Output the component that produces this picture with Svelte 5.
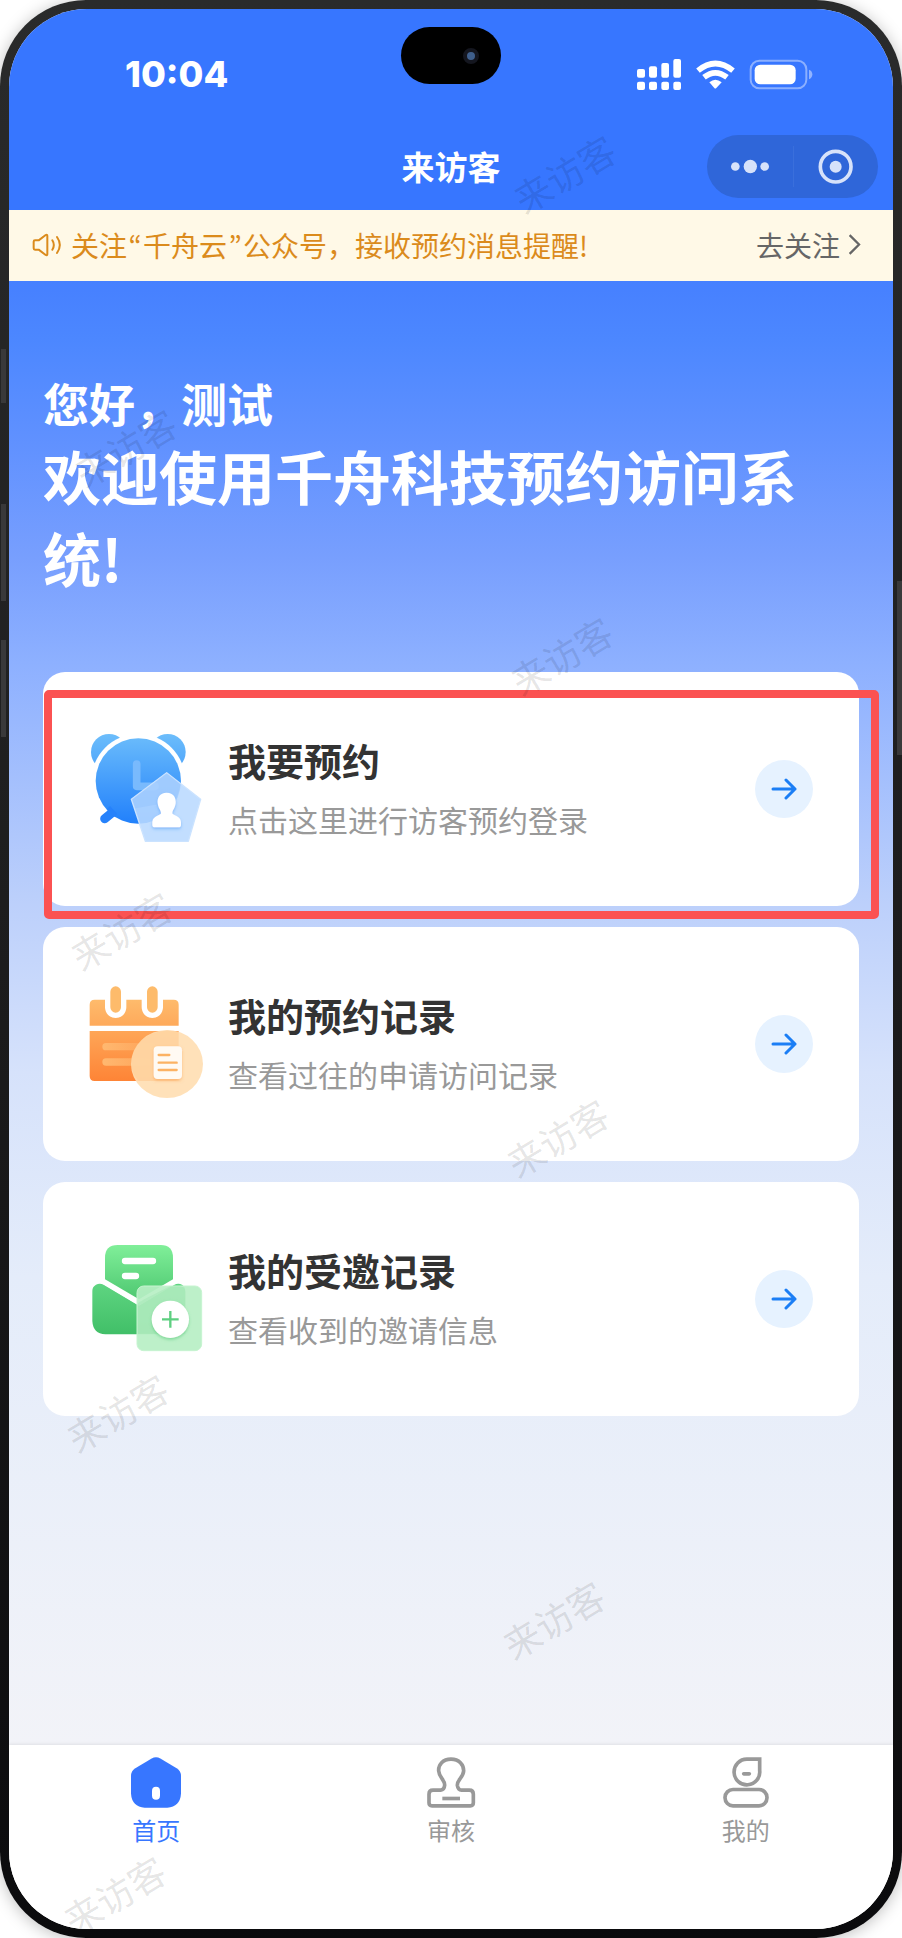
<script>
  const cards = [
    { id: 'book', title: '我要预约', text: '点击这里进行访客预约登录', marked: true },
    { id: 'records', title: '我的预约记录', text: '查看过往的申请访问记录' },
    { id: 'invites', title: '我的受邀记录', text: '查看收到的邀请信息' }
  ];

  const tabs = [
    { id: 'home', label: '首页' },
    { id: 'review', label: '审核' },
    { id: 'mine', label: '我的' }
  ];

  const watermarks = [
    { x: 564, y: 173 },
    { x: 125, y: 447 },
    { x: 561, y: 655 },
    { x: 121, y: 930 },
    { x: 557, y: 1137 },
    { x: 117, y: 1412 },
    { x: 553, y: 1619 },
    { x: 114, y: 1894 }
  ];

  let active = $state('home');
</script>

<div class="phone" lang="zh-CN">
  <i class="key key-a"></i>
  <i class="key key-b"></i>
  <i class="key key-c"></i>
  <i class="key key-d"></i>

  <div class="screen">
    <header>
      <div class="status">
        <span class="time">10:04</span>
        <svg class="signals" viewBox="552 165 531 111" aria-hidden="true">
          <g fill="#fff">
            <rect x="555" y="204" width="24" height="26" rx="6" />
            <rect x="591" y="196" width="24" height="34" rx="6" />
            <rect x="628" y="186" width="23" height="44" rx="6" />
            <rect x="664" y="174" width="23" height="56" rx="6" />
            <rect x="555" y="242" width="24" height="25" rx="6" />
            <rect x="591" y="242" width="24" height="25" rx="6" />
            <rect x="628" y="242" width="23" height="25" rx="6" />
            <rect x="664" y="242" width="23" height="25" rx="6" />
            <path d="M772 244Q790 229 809 244L793 261Q790 264 787 261Z" />
          </g>
          <g fill="none" stroke="#fff" stroke-width="17">
            <path d="M738 209Q790 166 843 209" />
            <path d="M756 229Q790 202 825 229" />
          </g>
          <rect x="896" y="179" width="167" height="83" rx="26" fill="none" stroke="#fff" stroke-opacity=".42" stroke-width="6" />
          <rect x="908" y="191" width="123" height="59" rx="17" fill="#fff" />
          <path d="M1071 206Q1081 210 1081 220Q1081 231 1071 235Z" fill="#fff" fill-opacity=".45" />
        </svg>
        <div class="island"><i></i></div>
      </div>
      <div class="nav">
        <h1>来访客</h1>
        <div class="capsule">
          <button aria-label="更多">
            <svg viewBox="836 446 120 104" width="40" height="35">
              <g fill="#d7e2fa">
                <circle cx="852" cy="498" r="13" />
                <circle cx="897" cy="498" r="20" />
                <circle cx="940" cy="498" r="13" />
              </g>
            </svg>
          </button>
          <button aria-label="关闭">
            <svg viewBox="1102 445 105 105" width="35" height="35">
              <circle cx="1155" cy="498" r="46" fill="none" stroke="#d7e2fa" stroke-width="11" />
              <circle cx="1155" cy="498" r="18" fill="#d7e2fa" />
            </svg>
          </button>
        </div>
      </div>
    </header>

    <div class="notice">
      <svg viewBox="97 702 90 72" width="30" height="24" fill="none" stroke="#db8b1c" stroke-width="6" stroke-linejoin="round" stroke-linecap="round" aria-hidden="true">
        <path d="M102 728Q102 724 106 724H117L138 708Q143 705 143 711V765Q143 771 138 768L117 752H106Q102 752 102 748Z" />
        <path d="M158 724Q167 738 158 752M172 714Q189 738 172 762" />
      </svg>
      <p>关注<span class="quote">“</span>千舟云<span class="quote">”</span>公众号，接收预约消息提醒!</p>
      <a href="#follow">
        去关注
        <svg viewBox="1192 704 40 68" width="13" height="23" fill="none" stroke="#666" stroke-width="7" aria-hidden="true">
          <path d="M1197 709L1226 738L1197 767" />
        </svg>
      </a>
    </div>

    <main>
      <p class="hello">您好，测试</p>
      <h2>欢迎使用千舟科技预约访问系统!</h2>

      <div class="cards">
        {#each cards as card (card.id)}
          <button class="card" class:marked={card.marked}>
            {#if card.id === 'book'}
              <svg class="art" viewBox="81 87 360 360" aria-hidden="true">
                <defs>
                  <linearGradient id="clock" gradientUnits="userSpaceOnUse" x1="0" y1="102" x2="0" y2="372">
                    <stop offset="0" stop-color="#6cbdfb" />
                    <stop offset="1" stop-color="#2180fb" />
                  </linearGradient>
                  <filter id="soft-blue" x="-30%" y="-30%" width="160%" height="170%">
                    <feDropShadow dx="0" dy="5" stdDeviation="5" flood-color="#4a9af5" flood-opacity=".55" />
                  </filter>
                </defs>
                <circle cx="147" cy="156" r="54" fill="url(#clock)" />
                <circle cx="323" cy="156" r="54" fill="url(#clock)" />
                <circle cx="235" cy="243" r="141" fill="#fff" />
                <path d="M134 356L156 338" stroke="#2682fb" stroke-width="27" stroke-linecap="round" />
                <circle cx="235" cy="243" r="128" fill="url(#clock)" />
                <path d="M140 328L163 350L172 342L150 318Z" fill="#2682fb" />
                <path d="M230 192V259H285" fill="none" stroke="#79bafd" stroke-width="23" stroke-linecap="round" stroke-linejoin="round" />
                <path d="M320 218L422 298L385 424H256L214 298Z" fill="#b9d9ff" fill-opacity=".88" stroke="#cbe3ff" stroke-width="4" stroke-linejoin="round" />
                <path d="M320 220L362 253Q356 282 343 312H300L226 325L217 298Z" fill="#7fb8fd" fill-opacity=".25" />
                <g filter="url(#soft-blue)" fill="#fff">
                  <path d="M320 278C299 278 291 294 293 310C295 326 303 330 303 340C303 346 278 347 277 366V375Q277 382 285 382H355Q363 382 363 375V366C362 347 337 346 337 340C337 330 345 326 347 310C349 294 341 278 320 278Z" />
                </g>
              </svg>
            {:else if card.id === 'records'}
              <svg class="art" viewBox="81 75 360 360" aria-hidden="true">
                <defs>
                  <linearGradient id="calendar" gradientUnits="userSpaceOnUse" x1="0" y1="82" x2="0" y2="366">
                    <stop offset="0" stop-color="#fec475" />
                    <stop offset="1" stop-color="#fe8436" />
                  </linearGradient>
                  <linearGradient id="rule" x1="0" x2="1">
                    <stop offset="0" stop-color="#ffb870" />
                    <stop offset="1" stop-color="#fea257" />
                  </linearGradient>
                  <filter id="soft-orange" x="-30%" y="-30%" width="160%" height="170%">
                    <feDropShadow dx="0" dy="5" stdDeviation="5" flood-color="#f79a45" flood-opacity=".5" />
                  </filter>
                </defs>
                <path d="M104 122H341Q356 122 356 137V200H89V137Q89 122 104 122ZM89 216H356V351Q356 366 341 366H104Q89 366 89 351Z" fill="url(#calendar)" />
                <path d="M167 112V145M277 112V145" stroke="#fff" stroke-width="64" stroke-linecap="round" />
                <path d="M167 98V145M277 98V145" stroke="#fdbb6b" stroke-width="32" stroke-linecap="round" />
                <rect x="127" y="252" width="160" height="22" rx="11" fill="url(#rule)" />
                <rect x="127" y="298" width="160" height="22" rx="11" fill="url(#rule)" />
                <ellipse cx="321" cy="315" rx="108" ry="102" fill="#ffdfb4" fill-opacity=".93" />
                <path d="M356 219V366H236Q214 342 214 315Q216 226 321 214Q340 213 356 219Z" fill="#fdb568" fill-opacity=".18" />
                <rect x="281" y="262" width="85" height="98" rx="12" fill="#fffaf3" filter="url(#soft-orange)" />
                <path d="M296 288H328M296 311H350M296 333H350" stroke="#fcb263" stroke-width="7" stroke-linecap="round" />
              </svg>
            {:else}
              <svg class="art" viewBox="81 90 360 360" aria-hidden="true">
                <defs>
                  <linearGradient id="letter" gradientUnits="userSpaceOnUse" x1="0" y1="108" x2="0" y2="290">
                    <stop offset="0" stop-color="#80ef99" />
                    <stop offset="1" stop-color="#48c36c" />
                  </linearGradient>
                  <linearGradient id="envelope" gradientUnits="userSpaceOnUse" x1="0" y1="222" x2="0" y2="376">
                    <stop offset="0" stop-color="#5fd581" />
                    <stop offset="1" stop-color="#41bf68" />
                  </linearGradient>
                  <filter id="soft-green" x="-30%" y="-30%" width="160%" height="170%">
                    <feDropShadow dx="0" dy="5" stdDeviation="5" flood-color="#55c979" flood-opacity=".6" />
                  </filter>
                </defs>
                <path d="M108 227Q120 221 132 228L237 290L342 228Q354 221 366 227Q376 233 376 246V336Q374 374 336 376H136Q99 374 97 336V246Q97 233 108 227Z" fill="url(#envelope)" />
                <path d="M173 108H302Q339 108 339 146V219L237 282L135 219V146Q135 108 173 108Z" fill="#fff" />
                <path d="M125 213L237 280L349 213" fill="none" stroke="#fff" stroke-width="16" />
                <path d="M173 108H302Q339 108 339 146V211L237 271L135 211V146Q135 108 173 108Z" fill="url(#letter)" />
                <path d="M195 156H279M195 201H228" stroke="#fff" stroke-width="19" stroke-linecap="round" />
                <rect x="231" y="231" width="194" height="194" rx="20" fill="#b7efc4" fill-opacity=".92" stroke="#c6f4d0" stroke-width="3" />
                <path d="M250 272L330 232H358Q376 232 376 250V374H234V282Z" fill="#8ee0a4" fill-opacity=".28" />
                <circle cx="331" cy="331" r="56" fill="#fff" filter="url(#soft-green)" />
                <path d="M306 331H356M331 306V356" stroke="#5dcf80" stroke-width="7" />
              </svg>
            {/if}
            <span class="copy">
              <strong>{card.title}</strong>
              <span>{card.text}</span>
            </span>
            <span class="go">
              <svg viewBox="0 0 26 22" width="26" height="22" fill="none" stroke="#1b7ef5" stroke-width="3" stroke-linecap="round" stroke-linejoin="round" aria-hidden="true">
                <path d="M2 11H24M15 2L24 11L15 20" />
              </svg>
            </span>
          </button>
        {/each}
      </div>
    </main>

    <nav class="tabs">
      {#each tabs as tab (tab.id)}
        <button class:active={active === tab.id} onclick={() => (active = tab.id)}>
          {#if tab.id === 'home'}
            <svg viewBox="393 112 150 152" aria-hidden="true">
              <path d="M455 116Q468 109 481 116L530 145Q543 153 543 168V222Q540 261 502 264H434Q396 261 393 222V168Q393 153 406 145Z" fill="#3776ff" />
              <rect x="456" y="201" width="24" height="39" rx="12" fill="#fff" />
            </svg>
          {:else if tab.id === 'review'}
            <svg viewBox="1278 112 150 152" fill="none" stroke="#999" stroke-width="11" aria-hidden="true">
              <path d="M1353 118C1328 118 1315 135 1316 153C1317 173 1335 180 1334 196Q1333 210 1322 211H1299Q1287 211 1287 223V249Q1287 258 1296 258H1411Q1420 258 1420 249V223Q1420 211 1408 211H1385Q1374 210 1372 196C1371 180 1390 173 1391 153C1391 135 1378 118 1353 118Z" />
              <path d="M1327 236H1380" />
            </svg>
          {:else}
            <svg viewBox="810 112 150 152" fill="none" stroke="#999" stroke-width="11" aria-hidden="true">
              <path d="M926 118V152A38.500 38.500 0 1 1 888 118Z" />
              <path d="M878 162H895" stroke-linecap="round" />
              <rect x="822" y="209" width="126" height="49" rx="24" />
            </svg>
          {/if}
          <span>{tab.label}</span>
        </button>
      {/each}
    </nav>
  </div>

  <div class="watermarks" aria-hidden="true">
    {#each watermarks as mark}
      <span style="left: {mark.x}px; top: {mark.y}px">来访客</span>
    {/each}
  </div>
</div>

<style>
  :global(body) {
    margin: 0;
    background: #fff;
  }

  .phone {
    position: relative;
    box-sizing: border-box;
    display: flex;
    min-height: 100vh;
    padding: 9px;
    overflow: hidden;
    border-radius: 86px;
    background: linear-gradient(#2a2b2b, #1c1c1d 50%, #0b0b0d);
    box-shadow: 0 2px 16px rgba(0, 0, 0, 0.25);
    font-family: "Noto Sans CJK SC", sans-serif;
    color: #fff;
  }

  .phone button {
    margin: 0;
    padding: 0;
    border: 0;
    background: none;
    font: inherit;
    color: inherit;
  }

  svg {
    flex: none;
    display: block;
  }

  .key {
    position: absolute;
    left: 1px;
    width: 5px;
    background: #39393a;
  }

  .key-a {
    top: 349px;
    height: 54px;
  }

  .key-b {
    top: 504px;
    height: 97px;
  }

  .key-c {
    top: 640px;
    height: 97px;
  }

  .key-d {
    top: 581px;
    right: 0;
    left: auto;
    height: 174px;
  }

  .screen {
    flex: 1;
    min-width: 0;
    display: flex;
    flex-direction: column;
    overflow: hidden;
    border-radius: 78px;
    background: #fff;
  }

  header {
    background: #3776ff;
  }

  .status {
    position: relative;
    box-sizing: border-box;
    display: flex;
    align-items: center;
    justify-content: space-between;
    height: 115px;
    padding: 15px 80px 0 116px;
  }

  .time {
    font: 800 36px/44px Inter, sans-serif;
  }

  .signals {
    width: 177px;
    height: 37px;
  }

  .island {
    position: absolute;
    top: 18px;
    left: 50%;
    width: 100px;
    height: 57px;
    margin-left: -50px;
    border-radius: 29px;
    background: #000;
  }

  .island i {
    position: absolute;
    top: 21px;
    right: 22px;
    width: 8px;
    height: 8px;
    border: 4px solid #14161f;
    border-radius: 50%;
    background: #3f5f8c;
  }

  .nav {
    display: grid;
    grid-template-columns: 1fr auto 1fr;
    align-items: center;
    height: 84px;
    padding: 0 15px 2px;
  }

  h1 {
    grid-column: 2;
    margin: 0;
    font-size: 33px;
    font-weight: 700;
    line-height: 48px;
  }

  .capsule {
    justify-self: end;
    display: flex;
    width: 171px;
    height: 63px;
    border-radius: 32px;
    background: #2f66d9;
  }

  .capsule button {
    flex: 1;
    display: grid;
    place-items: center;
    position: relative;
  }

  .capsule button + button::before {
    content: "";
    position: absolute;
    left: 0;
    top: 11px;
    bottom: 11px;
    width: 1px;
    background: #3a6fdc;
  }

  .notice {
    display: flex;
    align-items: center;
    height: 69px;
    padding: 0 32px 2px 23px;
    background: #fff9e7;
    font-size: 28px;
    line-height: 40px;
    color: #db8b1c;
  }

  .notice p {
    flex: 1;
    margin: 0 0 0 9px;
  }

  .quote {
    display: inline-block;
    width: 16px;
    font-family: "Noto Sans CJK KR", sans-serif;
    text-align: center;
  }

  .notice a {
    display: flex;
    align-items: center;
    gap: 8px;
    color: #666;
    text-decoration: none;
  }

  main {
    flex: 1;
    padding: 89px 34px 40px;
    background: linear-gradient(
      #4680ff,
      #4c87ff 4%,
      #6091ff 11%,
      #789ffe 19%,
      #8db0ff 26%,
      #bbcffb 42%,
      #d6e2fb 54%,
      #e4ecfa 68%,
      #f2f3f8
    );
  }

  .hello {
    margin: 0;
    font-size: 46px;
    font-weight: 700;
    line-height: 64px;
  }

  h2 {
    margin: 0;
    font-size: 58px;
    font-weight: 700;
    line-height: 82px;
  }

  .cards {
    display: grid;
    gap: 21px;
    margin-top: 74px;
  }

  .phone .card {
    position: relative;
    box-sizing: border-box;
    display: flex;
    align-items: center;
    gap: 21px;
    min-height: 234px;
    padding: 40px 46px 40px 44px;
    border-radius: 22px;
    background: #fff;
    text-align: left;
  }

  .marked::after {
    content: "";
    position: absolute;
    inset: 18px -20px -13px 1px;
    border: 8px solid #fb5252;
    border-radius: 5px;
  }

  .art {
    width: 120px;
    height: 120px;
  }

  .copy {
    flex: 1;
    display: grid;
    gap: 10px;
    padding-bottom: 6px;
    font-size: 30px;
    line-height: 42px;
    color: #999;
  }

  .copy strong {
    font-size: 38px;
    font-weight: 700;
    line-height: 56px;
    color: #333;
  }

  .go {
    display: grid;
    place-items: center;
    width: 58px;
    height: 58px;
    border-radius: 50%;
    background: #e6f2ff;
  }

  .tabs {
    display: grid;
    grid-template-columns: repeat(3, 1fr);
    min-height: 184px;
    background: #fff;
    box-shadow: 0 -1px 3px rgba(0, 0, 0, 0.08);
  }

  .phone .tabs button {
    display: flex;
    flex-direction: column;
    align-items: center;
    gap: 6px;
    padding-top: 12px;
    font-size: 24px;
    line-height: 32px;
    color: #999;
  }

  .phone .tabs .active {
    color: #3776ff;
  }

  .tabs svg {
    width: 50px;
    height: 51px;
  }

  .watermarks {
    position: absolute;
    inset: 9px;
    overflow: hidden;
    border-radius: 78px;
    pointer-events: none;
  }

  .watermarks span {
    position: absolute;
    margin: -9px;
    transform: translate(-50%, -50%) rotate(-31deg);
    font-size: 37px;
    line-height: 40px;
    white-space: nowrap;
    color: rgba(0, 0, 0, 0.11);
  }
</style>
